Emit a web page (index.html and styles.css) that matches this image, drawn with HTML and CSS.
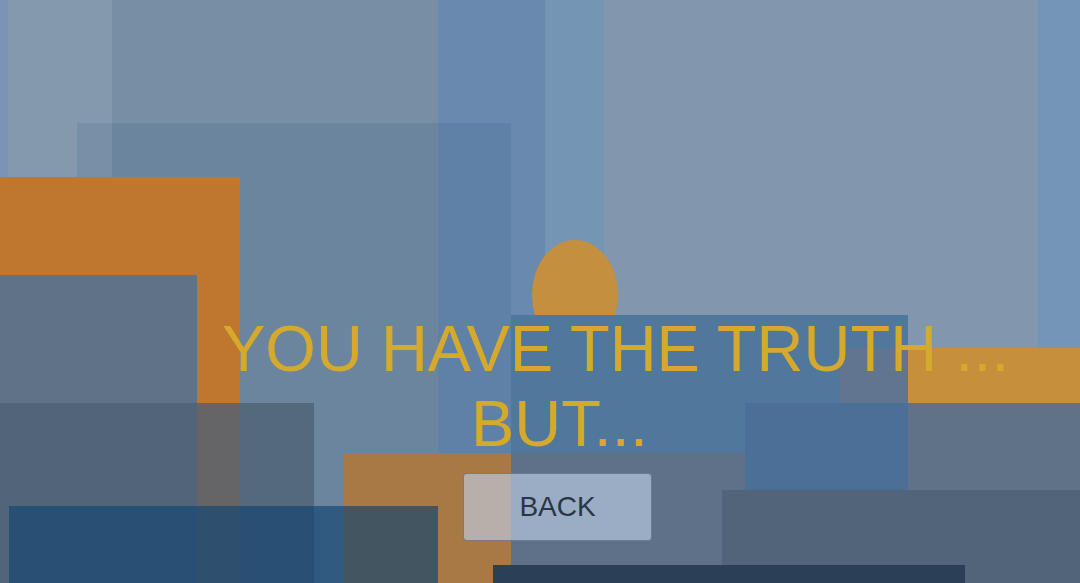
FILE: index.html
```html
<!DOCTYPE html>
<html lang="en">

<head>
    <meta name="viewport" content="width=device-width, initial-scale=1.0">
    <link rel="stylesheet" href="styles.css">
    <title>The Truth</title>
</head>

<body>
    <div class="scene">
        <!-- background: stacked translucent panels -->
        <div class="shapes">
            <div class="block col-a"></div>
            <div class="block col-b"></div>
            <div class="block col-c"></div>
            <div class="block col-d"></div>
            <div class="block col-e"></div>
            <div class="block col-f"></div>
            <div class="block col-g"></div>

            <div class="block panel-a"></div>
            <div class="block panel-b"></div>
            <div class="block panel-c"></div>
            <div class="block panel-d"></div>
            <div class="block panel-f"></div>
            <div class="block panel-e"></div>

            <div class="block sun"></div>

            <div class="block panel-i"></div>
            <div class="block panel-h"></div>
            <div class="block panel-g1"></div>
            <div class="block panel-g2"></div>
            <div class="block panel-g3"></div>
            <div class="block panel-j"></div>
            <div class="block panel-m"></div>
            <div class="block panel-k"></div>
            <div class="block panel-l"></div>
        </div>

        <main class="overlay">
            <h1 class="title">
                <span class="title-line first">YOU HAVE THE TRUTH ...</span>
                <span class="title-line second">BUT...</span>
            </h1>
            <button class="back-btn" onclick="history.back()">BACK</button>
        </main>
    </div>
</body>

</html>
```

FILE: styles.css
```css
body {
    margin: 0;
    padding: 0;
    overflow: hidden;
    font-family: "Liberation Sans", Arial, sans-serif;
}

.scene {
    position: relative;
    width: 1080px;
    height: 583px;
    overflow: hidden;
    background-color: #778ea5;
}

.shapes {
    position: absolute;
    inset: 0;
}

.block {
    position: absolute;
}

/* sky columns */
.col-a { left: 0; top: 0; width: 8px; height: 583px; background-color: #7994b4; }
.col-b { left: 8px; top: 0; width: 104px; height: 583px; background-color: #8599ae; }
.col-c { left: 112px; top: 0; width: 326px; height: 583px; background-color: #778ea5; }
.col-d { left: 438px; top: 0; width: 107px; height: 583px; background-color: #6a89ae; }
.col-e { left: 545px; top: 0; width: 59px; height: 583px; background-color: #7595b4; }
.col-f { left: 604px; top: 0; width: 434px; height: 583px; background-color: #8297ad; }
.col-g { left: 1038px; top: 0; width: 42px; height: 583px; background-color: #7595b6; }

/* left stack */
.panel-a { left: 77px; top: 123px; width: 434px; height: 460px; background-color: rgba(40, 87, 127, 0.15); }
.panel-b { left: 0; top: 177px; width: 240px; height: 406px; background-color: #bf762e; }
.panel-c { left: 0; top: 275px; width: 197px; height: 308px; background-color: #5f7287; }
.panel-d { left: 0; top: 403px; width: 314px; height: 180px; background-color: rgba(79, 96, 117, 0.8); }
.panel-f { left: 344px; top: 453px; width: 167px; height: 130px; background-color: #a87845; }
.panel-e { left: 9px; top: 506px; width: 429px; height: 77px; background-color: rgba(20, 69, 114, 0.67); }

.sun {
    left: 532px;
    top: 240px;
    width: 86px;
    height: 110px;
    border-radius: 50%;
    background-color: #c48f3e;
}

/* right stack */
.panel-i { left: 840px; top: 348px; width: 240px; height: 235px; background-color: #5f7287; }
.panel-h { left: 908px; top: 348px; width: 172px; height: 55px; background-color: #c58f3c; }
.panel-g1 { left: 511px; top: 315px; width: 397px; height: 33px; background-color: #4f789c; }
.panel-g2 { left: 511px; top: 348px; width: 329px; height: 105px; background-color: #4f789c; }
.panel-g3 { left: 840px; top: 348px; width: 68px; height: 55px; background-color: #617591; }
.panel-j { left: 745px; top: 403px; width: 163px; height: 87px; background-color: #4b6f96; }
.panel-m { left: 511px; top: 453px; width: 234px; height: 130px; background-color: #5f7189; }
.panel-k { left: 722px; top: 490px; width: 358px; height: 93px; background-color: #526479; }
.panel-l { left: 493px; top: 565px; width: 472px; height: 18px; background-color: #2b3f56; }

.overlay {
    position: absolute;
    inset: 0;
    display: flex;
    flex-direction: column;
    align-items: flex-start;
    padding-top: 311px;
    box-sizing: border-box;
}

.title {
    margin: 0;
    font-size: 65px;
    line-height: 75px;
    font-weight: normal;
    color: #d5a92b;
    white-space: nowrap;
}

.title-line {
    display: block;
}

.first {
    padding-left: 222px;
}

.second {
    padding-left: 471px;
}

.back-btn {
    margin: 12px 0 0 463px;
    width: 189px;
    height: 68px;
    padding: 0;
    font-family: "Liberation Sans", Arial, sans-serif;
    font-size: 28px;
    color: #2b3545;
    background-color: rgba(190, 210, 232, 0.62);
    border: 1px solid rgba(50, 60, 80, 0.45);
    border-radius: 4px;
    cursor: pointer;
}
```
